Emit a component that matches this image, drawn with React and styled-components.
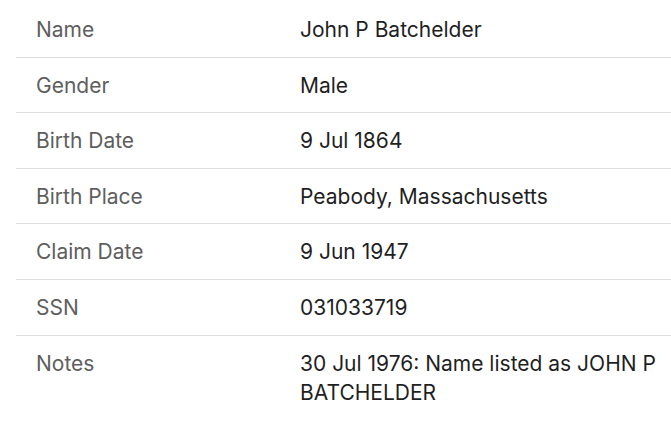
import React from 'react';
import styled, { createGlobalStyle } from 'styled-components';

const GlobalStyle = createGlobalStyle`
  body {
    margin: 0;
    background: #fff;
    font-family: Inter, "Liberation Sans", sans-serif;
  }
`

const Table = styled.div`
  margin: 2px 0 0 16px;
  display: flex;
  flex-direction: column;
`

const Row = styled.div`
  display: grid;
  grid-template-columns: 284px 1fr;
  padding: 13px 0 12.6px;
  border-bottom: ${p => (p.last ? 'none' : '1px solid #dedede')};
  font-size: 21px;
  line-height: 29px;
`

const Label = styled.div`
  padding-left: 20px;
  color: #5e5e5e;
`

const Value = styled.div`
  color: #1f1f1f;
  padding-right: 8px;
`

const rows = [
  ['Name', 'John P Batchelder'],
  ['Gender', 'Male'],
  ['Birth Date', '9 Jul 1864'],
  ['Birth Place', 'Peabody, Massachusetts'],
  ['Claim Date', '9 Jun 1947'],
  ['SSN', '031033719'],
  ['Notes', '30 Jul 1976: Name listed as JOHN P BATCHELDER'],
];

const App = () => (
  <>
    <GlobalStyle />
    <Table>
      {rows.map(([label, value], i) => (
        <Row key={label} last={i === rows.length - 1}>
          <Label>{label}</Label>
          <Value>{value}</Value>
        </Row>
      ))}
    </Table>
  </>
);

export default App;
